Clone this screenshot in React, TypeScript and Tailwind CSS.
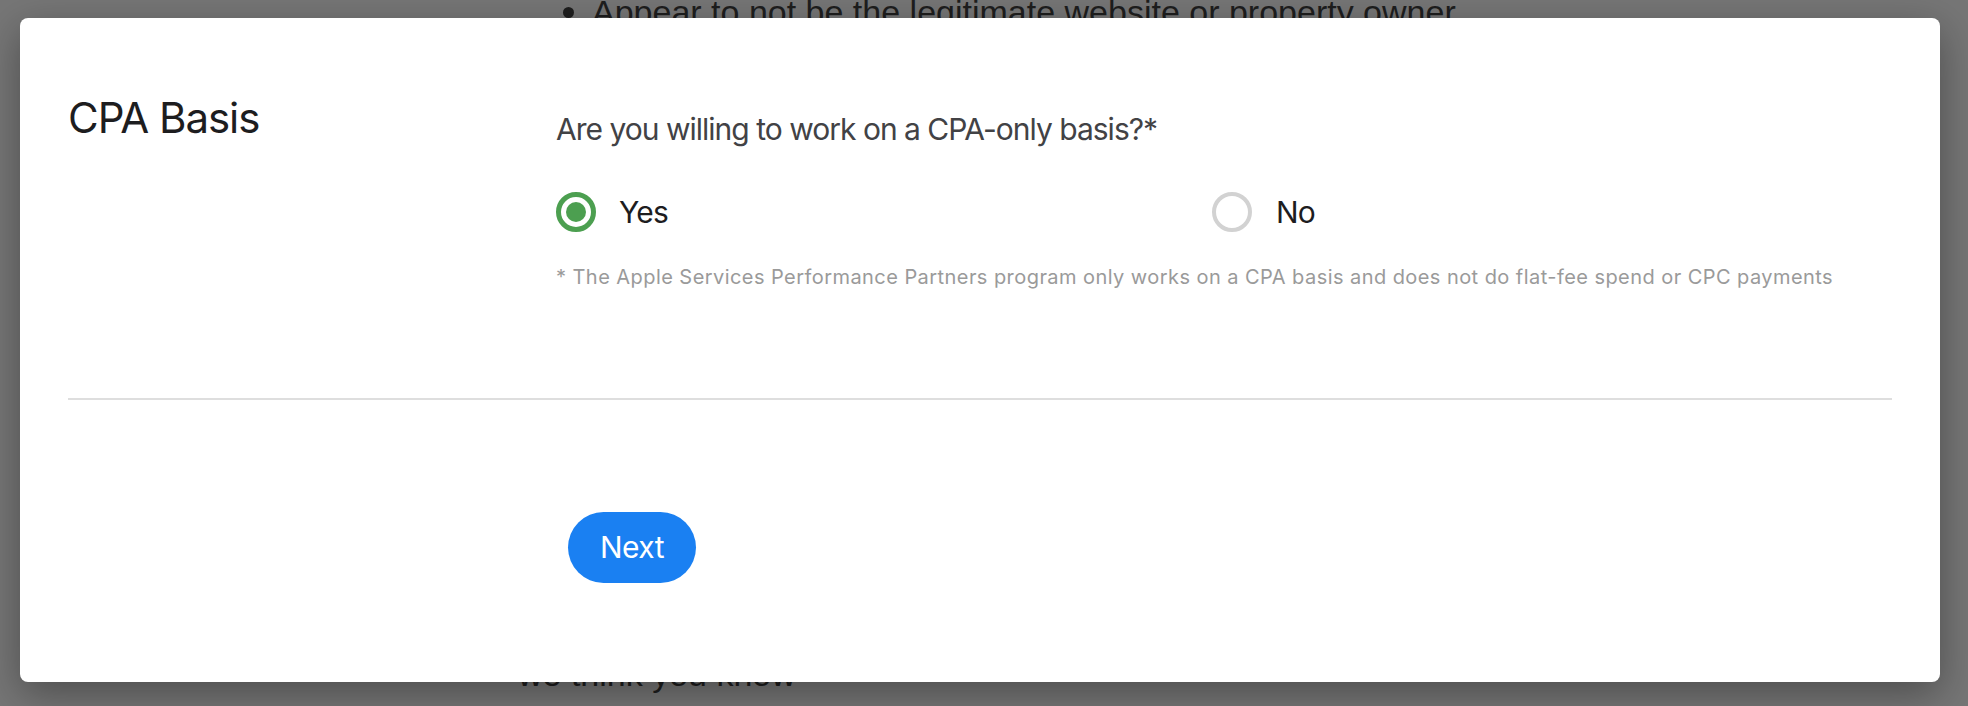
export default function App() {
  return (
    <div className="relative w-full h-[706px] overflow-hidden bg-[#767676]">
      {/* page content behind the overlay */}
      <div className="flex flex-col justify-between h-full text-[34px] leading-[34px] text-[#1e1e1e] font-['Liberation_Sans',sans-serif]">
        <ul className="-mt-[5px] ml-[563px]">
          <li className="flex items-center gap-[18px]">
            <span className="w-[11px] h-[11px] rounded-full bg-[#1e1e1e]" />
            <span>Appear to not be the legitimate website or property owner</span>
          </li>
        </ul>
        <p className="ml-[518px] mb-[15px]">we think you know</p>
      </div>

      {/* modal */}
      <div className="absolute left-[20px] top-[18px] w-[1920px] h-[664px] rounded-[8px] bg-white shadow-[0_12px_40px_rgba(0,0,0,0.35)] px-[48px] pt-[75px] flex flex-col font-['Inter',sans-serif]">
        <div className="flex">
          <div className="w-[488px] shrink-0">
            <h2 className="text-[42px] leading-[50px] tracking-[-0.025em] text-[#1d1d1f]">CPA Basis</h2>
          </div>
          <div className="flex-1 pt-[18px]">
            <p className="text-[30px] leading-[36px] tracking-[-0.033em] text-[#424245]">
              Are you willing to work on a CPA-only basis?*
            </p>
            <div className="grid grid-cols-[656px_1fr] mt-[45px]">
              <label className="flex items-center gap-[23px]">
                <span className="w-[40px] h-[40px] rounded-full border-[5px] border-[#4c9f50] flex items-center justify-center">
                  <span className="w-[20px] h-[20px] rounded-full bg-[#4c9f50]" />
                </span>
                <span className="text-[30px] leading-[40px] tracking-[-0.025em] text-[#1d1d1f]">Yes</span>
              </label>
              <label className="flex items-center gap-[24px]">
                <span className="w-[40px] h-[40px] rounded-full border-[4px] border-[#d2d2d2]" />
                <span className="text-[30px] leading-[40px] tracking-[-0.025em] text-[#1d1d1f]">No</span>
              </label>
            </div>
            <p className="mt-[31px] text-[20px] leading-[28px] tracking-[0.022em] text-[#9a9a9a]">
              * The Apple Services Performance Partners program only works on a CPA basis and does not do flat-fee spend or CPC payments
            </p>
          </div>
        </div>
        <div className="mt-[107px] h-[2px] bg-[#dedede]" />
        <div className="mt-[112px] pl-[500px]">
          <button className="w-[128px] h-[71px] rounded-full bg-[#1a80f2] text-white text-[30px] tracking-[-0.02em] flex items-center justify-center">
            Next
          </button>
        </div>
      </div>
    </div>
  );
}
